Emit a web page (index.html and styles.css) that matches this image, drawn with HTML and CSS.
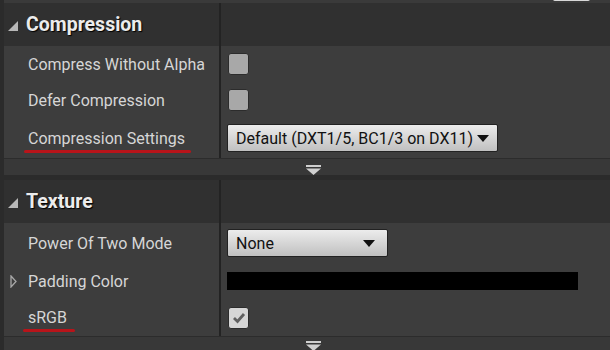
FILE: index.html
```html
<!DOCTYPE html>
<html lang="en">
<head>
    <meta charset="UTF-8">
    <title>Texture Details</title>
    <link rel="stylesheet" href="styles.css">
</head>
<body>
    <div class="top-strip"><span class="top-tab"></span></div>

    <!-- Compression -->
    <div class="section">
        <div class="header">
            <div class="header-name">
                <svg class="collapse" width="10" height="10" viewBox="0 0 10 10"><polygon points="10,0 10,10 0,10" fill="#b8b8b8"/></svg>
                <span>Compression</span>
            </div>
            <div class="header-value"></div>
        </div>
        <div class="row">
            <div class="name">Compress Without Alpha</div>
            <div class="value"><span class="checkbox"></span></div>
        </div>
        <div class="row">
            <div class="name">Defer Compression</div>
            <div class="value"><span class="checkbox"></span></div>
        </div>
        <div class="row row-combo">
            <div class="name"><span class="marked">Compression Settings</span></div>
            <div class="value">
                <div class="combo combo-wide">Default (DXT1/5, BC1/3 on DX11)<span class="combo-arrow"></span></div>
            </div>
        </div>
        <div class="expander">
            <svg width="15" height="10" viewBox="0 0 15 10"><rect x="0" y="0" width="15" height="2" fill="#d0d0d0"/><polygon points="0,3.5 15,3.5 7.5,10" fill="#d0d0d0"/></svg>
        </div>
    </div>

    <!-- Texture -->
    <div class="section">
        <div class="header">
            <div class="header-name">
                <svg class="collapse" width="10" height="10" viewBox="0 0 10 10"><polygon points="10,0 10,10 0,10" fill="#b8b8b8"/></svg>
                <span>Texture</span>
            </div>
            <div class="header-value"></div>
        </div>
        <div class="row row-combo">
            <div class="name">Power Of Two Mode</div>
            <div class="value">
                <div class="combo combo-small">None<span class="combo-arrow"></span></div>
            </div>
        </div>
        <div class="row">
            <div class="name">
                <svg class="expand" width="7" height="13" viewBox="0 0 7 13"><polygon points="1,1 6,6.5 1,12" fill="none" stroke="#a8a8a8" stroke-width="1.3"/></svg>
                Padding Color
            </div>
            <div class="value"><span class="color-bar"></span></div>
        </div>
        <div class="row row-last">
            <div class="name"><span class="marked marked-short">sRGB</span></div>
            <div class="value">
                <span class="checkbox checked">
                    <svg width="14" height="12" viewBox="0 0 14 12"><polyline points="2,6 5.5,9.5 12,2" fill="none" stroke="#606060" stroke-width="2.8"/></svg>
                </span>
            </div>
        </div>
        <div class="expander expander-last">
            <svg width="15" height="10" viewBox="0 0 15 10"><rect x="0" y="0" width="15" height="2" fill="#d0d0d0"/><polygon points="0,3.5 15,3.5 7.5,10" fill="#d0d0d0"/></svg>
        </div>
    </div>
</body>
</html>
```

FILE: styles.css
```css
body {
    margin: 0;
    background-color: #2b2b2b;
    font-family: Roboto, "Liberation Sans", sans-serif;
    color: #d6d6d6;
    overflow: hidden;
}
.top-strip {
    height: 3px;
    margin-left: 4px;
    background-color: #3a3a3a;
    position: relative;
}
.top-tab {
    position: absolute;
    left: 549px;
    top: -3px;
    width: 37px;
    height: 4px;
    background-color: #d8d8d8;
    border-radius: 0 0 2px 2px;
}
.section {
    margin-left: 4px;
}
.section + .section {
    margin-top: 5px;
}
.header {
    display: flex;
    height: 43px;
    background-color: #303030;
}
.header-name {
    width: 211px;
    display: flex;
    align-items: center;
    gap: 8px;
    padding-left: 4px;
    border-right: 2px solid #232323;
    font-size: 19.5px;
    font-weight: bold;
    color: #ececec;
    text-shadow: 1px 1px 1px #000;
}
.collapse {
    margin-top: 3px;
}
.header-value {
    flex: 1;
}
.row {
    display: flex;
    height: 36px;
    background-color: #3d3d3d;
}
.row-combo {
    height: 40px;
}
.row-last {
    height: 37px;
}
.name {
    width: 191px;
    padding-left: 24px;
    display: flex;
    align-items: center;
    font-size: 16px;
    border-right: 2px solid #232323;
    position: relative;
}
.expand {
    position: absolute;
    left: 6px;
    top: 12px;
}
.value {
    flex: 1;
    display: flex;
    align-items: center;
    padding-left: 6px;
}
.marked {
    position: relative;
}
.marked::after {
    content: "";
    position: absolute;
    left: -4px;
    right: -6px;
    bottom: -5px;
    height: 3px;
    border-radius: 2px;
    background-color: #b8141a;
}
.marked-short::after {
    left: -5px;
    right: -8px;
}
.checkbox {
    width: 19px;
    height: 20px;
    margin-left: 1px;
    border-radius: 3px;
    border: 1px solid #2c2c2c;
    background-color: #a8a8a8;
    display: flex;
    align-items: center;
    justify-content: center;
}
.checked {
    background-color: #d6d6d6;
}
.combo {
    height: 28px;
    box-sizing: border-box;
    border: 1px solid #222;
    border-radius: 2px;
    background: linear-gradient(#ececec, #c0c0c0);
    color: #111;
    font-size: 16px;
    display: flex;
    align-items: center;
    padding-left: 8px;
    padding-right: 6px;
}
.combo-wide {
    width: 271px;
}
.combo-small {
    width: 161px;
    justify-content: space-between;
    padding-right: 12px;
}
.combo-arrow {
    width: 0;
    height: 0;
    margin-left: 4px;
    border-left: 6px solid transparent;
    border-right: 6px solid transparent;
    border-top: 7px solid #111;
}
.color-bar {
    width: 351px;
    height: 18px;
    background-color: #000;
}
.expander {
    height: 17px;
    border-top: 1px solid #2c2c2c;
    background-color: #383838;
    display: flex;
    justify-content: center;
    padding-top: 6px;
    padding-left: 12px;
    box-sizing: border-box;
}
.expander-last {
    height: 14px;
    padding-top: 4px;
}
```
